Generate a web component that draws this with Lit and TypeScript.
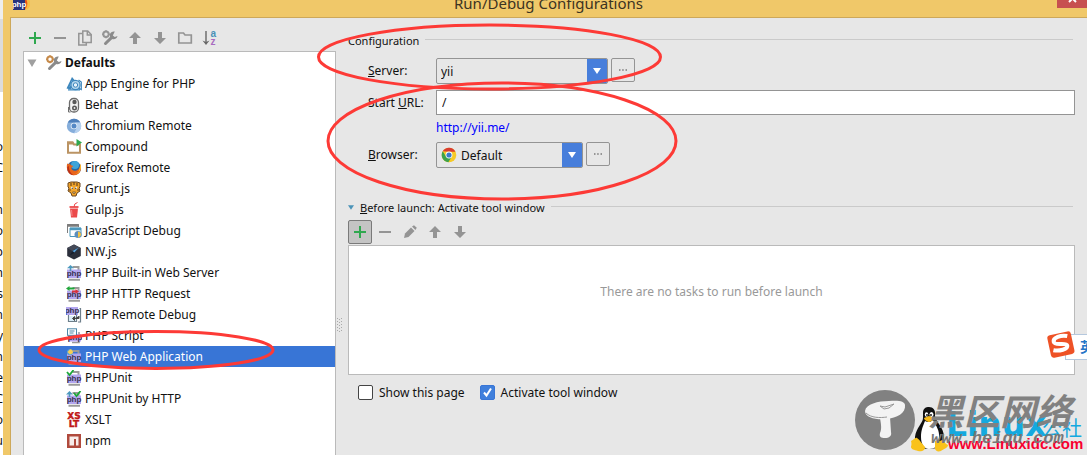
import { LitElement, html, css, svg, nothing } from "lit";
import { customElement, state } from "lit/decorators.js";
import { classMap } from "lit/directives/class-map.js";

const icon = (body: unknown, size = 16) =>
  html`<svg class="icon" width=${size} height=${size} viewBox="0 0 16 16" aria-hidden="true">${body}</svg>`;

const G = "#949494";

const plus = svg`<path d="M8 2v12M2 8h12" stroke="#2fa84f" stroke-width="2" fill="none"/>`;
const minus = svg`<path d="M2 8h12" stroke=${G} stroke-width="2"/>`;
const arrowUp = svg`<path d="M8 2l6 6h-4v6H6V8H2z" fill=${G}/>`;
const arrowDown = svg`<path d="M8 14l6-6h-4V2H6v6H2z" fill=${G}/>`;
const copy = svg`<g fill="#e7e7e7" stroke=${G} stroke-width="1.5">
  <path d="M5 3.500H1.800V15h7.500v-2"/><path d="M5.800 1h5L14.200 4.500V12.500H5.800z"/><path d="M10.300 1v4h4" fill="none"/></g>`;
const wrench = (nut: string) => svg`
  <circle cx="4" cy="4.200" r="2.700" fill="none" stroke=${nut} stroke-width="2"/>
  <path d="M4 .3v1.500M4 6.800v1.500M.1 4.200h1.500M6.400 4.200h1.500" stroke=${nut} stroke-width="1.600"/>
  <path d="M3.500 13.500L10 7.200" stroke="#8b8b8b" stroke-width="3" stroke-linecap="round"/>
  <path d="M12.800 1.600a3.900 3.900 0 1 0 2.700 4.300l-2.700 1.200-2-1.700z" fill="#8b8b8b"/>`;
const folder = svg`<path d="M1.800 13V3h4.700l1.500 2h6.300v8z" fill="none" stroke=${G} stroke-width="1.700"/>`;
const sortAz = svg`<path d="M4 1v12" stroke="#666" stroke-width="1.400"/><path d="M.5 10.500L4 15l3.500-4.500L4 12z" fill="#666"/>
  <text x="8.500" y="7" class="az" fill="#4a93b8">a</text><text x="8.500" y="15" class="az" fill="#a86bc0">z</text>`;
const pencil = svg`<path d="M2 14l1-4.500 6-6 3.500 3.500-6 6z" fill=${G}/><path d="M10 2.600L12 1.200l2.800 2.600L13.400 6z" fill=${G}/>`;
const php = svg`<rect x="1" y="4.500" width="14" height="8.500" fill="#b3a6ef"/><text x="8" y="10.500" class="php" text-anchor="middle">php</text>`;
const pageEdge = svg`<path d="M6.500 2h6v3M2.500 14.800h11.500" stroke="#9a9a9a" stroke-width="2" fill="none"/>`;

const icons: Record<string, unknown> = {
  engine: svg`<path d="M.5 12.500L6 1l3 3.500L5 13.500z" fill="#3d87bd"/><path d="M3.500 11L6 4.500l1.500 1.700z" fill="#cfe6f5"/>
    <circle cx="9.500" cy="9" r="4.600" fill="#b7d9ee" stroke="#3d87bd" stroke-width="1.200"/><circle cx="9.500" cy="9" r="2.200" fill="#e9f5fc" stroke="#3d87bd"/>
    <path d="M12.500 4l2.800 2v7.500l-3-1.500M2 13.800h12" fill="none" stroke="#3d87bd" stroke-width="1.200"/>`,
  behat: svg`<rect x="3.500" y="1.500" width="9" height="13.500" rx="4" fill="#f4f4f4" stroke="#6c6c6c" stroke-width="1.300"/>
    <circle cx="8.500" cy="5" r="2.200" fill="#5a5a5a"/><circle cx="8.500" cy="11" r="2.500" fill="#5a5a5a"/><circle cx="8.500" cy="11" r=".9" fill="#eee"/><path d="M2.500 10v5h2" stroke="#6c6c6c" fill="none"/>`,
  chromium: svg`<circle cx="8" cy="8" r="7.200" fill="#86aedb"/><path d="M1.800 4.400A7.200 7.200 0 0 1 14.300 4.500H8z" fill="#4d7fbb"/>
    <path d="M8 15.200a7.200 7.200 0 0 0 6.300-10.700H9l2 5z" fill="#b5d0ee"/><circle cx="8" cy="8" r="3.300" fill="#e6f0fa"/><circle cx="8" cy="8" r="2.500" fill="#5488c5"/>`,
  compound: svg`<path d="M2 13.800V3.200h4.600L8 5.500h6v8.300z" fill="none" stroke="#bb9464" stroke-width="2"/><path d="M1 3h6l1.500 2.500H1z" fill="#bb9464"/><path d="M10.500 0l5.500 3.500-5.500 4z" fill="#2fa84f"/>`,
  firefox: svg`<circle cx="8" cy="8" r="7" fill="#2467a8"/><circle cx="9" cy="5" r="4" fill="#3fa4da"/>
    <path d="M1.200 3.500C0 8 1.500 15.200 8 15.200S16 9 14.500 3.800c-.5 4-2 6.800-5 6.900C6.500 10.800 5 9.200 5.500 7.500L7.500 6 5 5.200 3.200 3 3 4.500z" fill="#e8641b"/>
    <path d="M14.500 3.800c1.500 5-1 10-5.500 10.400 3-1 4.300-3 4.500-5.500z" fill="#fbc02d"/><path d="M1.200 7C1.500 12 4 15.200 8 15.200 5 14 3 11 2.800 6z" fill="#b92e1a"/>`,
  grunt: svg`<path d="M2 2l3-1h6l3 1v4l-1 1 1 3-3 2-1 3H6l-1-3-3-2 1-3-1-1z" fill="#f0a32a" stroke="#6b4720"/>
    <path d="M5 2v3M8 1v3M11 2v3M3 9h2M11 9h2" stroke="#6b4720" stroke-width="1.200"/><circle cx="6" cy="7" r="1.200" fill="#fff"/><circle cx="10" cy="7" r="1.200" fill="#fff"/>
    <circle cx="6.200" cy="7.200" r=".7" fill="#3b2413"/><circle cx="9.800" cy="7.200" r=".7" fill="#3b2413"/><path d="M6.500 11h3l-1.500 2z" fill="#fbe3b0" stroke="#6b4720" stroke-width=".7"/>`,
  gulp: svg`<path d="M3.500 5h9" stroke="#eb4a4b" stroke-width="1.800"/><path d="M4 6.500h8L11 15.500H5z" fill="#eb4a4b"/><path d="M8 5l.8-3L11.500.5" fill="none" stroke="#eb4a4b"/><path d="M5 8h1l.6 6h-1z" fill="#f58a8a"/>`,
  jsdebug: svg`<path d="M1.500 10V1.500h11V4" fill="#fff" stroke="#7d7d7d"/><path d="M1 2.500h12" stroke="#7d7d7d" stroke-width="2.500"/>
    <path d="M4 5h11v8.500H4z" fill="#fff" stroke="#4b98bd"/><path d="M4 6h11" stroke="#4b98bd" stroke-width="2.500"/><circle cx="12" cy="11.500" r="3.500" fill="#5d8fbd"/><path d="M12 8.500a3 3 0 0 1 2.500 4.500L12 15z" fill="#f5c342"/>`,
  nw: svg`<path d="M8 .5l6.800 3.600v7.800L8 15.500l-6.800-3.600V4.100z" fill="#2b2f3b"/><path d="M8 .5l6.800 3.600L8 8 1.200 4.100z" fill="#454a58"/><path d="M3.500 11.500L7.500 6l5-2.500L8.500 9z" fill="#17202f"/><path d="M8.500 8.500l4-5-6 3.500z" fill="#58a2dd"/>`,
  phpServer: svg`${pageEdge}${php}<path d="M4.500 6V2" stroke="#4b98bd" stroke-width="1.600"/><path d="M1 3.200L4.500 0 8 3.200z" fill="#4b98bd"/>`,
  phpHttp: svg`${pageEdge}${php}<path d="M0 2.500L3.500 0v1.500h5v2h-5V5z" fill="#23a83c"/><path d="M13 5.500L9.500 3v1.500H6v2h3.500V8z" fill="#d8323a"/>`,
  phpRemote: svg`<path d="M13.500 1.500h1V15H12M2.500 8v6.500h8V8" fill="none" stroke="#6e7f8b" stroke-width="1.200"/><rect x="3" y="9" width="7" height="5" fill="#d9ecf6"/>
    <rect x="0" y="0" width="12" height="8" fill="#b3a6ef"/><text x="6" y="6" class="php" text-anchor="middle">php</text><path d="M13 9v2.500H8M8.500 9.500L6.500 11.500l2 2z" fill="#444" stroke="#444"/>`,
  phpScript: svg`<path d="M13 4v10.500H6" fill="none" stroke="#9a9a9a" stroke-width="1.500"/><rect x="2" y="6" width="13" height="7.500" fill="#b3a6ef"/><text x="9" y="12" class="php" text-anchor="middle">php</text>
    <rect x="1.500" y=".8" width="9" height="6.500" fill="#fff" stroke="#4b87a8"/><path d="M3.500 3h5M3.500 5h4" stroke="#4b87a8"/>`,
  phpWeb: svg`${pageEdge}${php}<circle cx="4" cy="3.200" r="3" fill="#5ba1d0"/><path d="M4 .2a3 3 0 0 1 2.800 4L4 5.500 1.500 3z" fill="#f7cf54"/>`,
  phpunit: svg`${pageEdge}${php}<path d="M1 2l2.500 3L7.500 0" fill="none" stroke="#1ca838" stroke-width="1.800"/>`,
  phpunitHttp: svg`${pageEdge}${php}<path d="M3.500 6V2" stroke="#4b98bd" stroke-width="1.600"/><path d="M0 3.500L3.500 0 7 3.500z" fill="#4b98bd"/><path d="M8 2l2.500 3L14.500 0" fill="none" stroke="#1ca838" stroke-width="1.800"/>`,
  xslt: svg`<text x="8" y="7.300" class="xs" text-anchor="middle">XS</text><text x="8" y="15.300" class="xs" text-anchor="middle">LT</text>`,
  npm: svg`<rect x="1" y="1" width="14" height="14" fill="#b04a3d"/><path d="M3.500 3.500h9v9H10V6H8v6.500H3.500z" fill="#f7ecea"/>`,
};

const chrome = svg`<circle cx="8" cy="8" r="7.300" fill="#f6c927"/><path d="M1.700 4.300A7.300 7.300 0 0 1 14.400 4.700H8z" fill="#d93c30"/>
  <path d="M1.700 4.300A7.300 7.300 0 0 0 7.300 15.300L10.300 10.500 5 9.500z" fill="#3da24b"/><circle cx="8" cy="8" r="3.400" fill="#fff"/><circle cx="8" cy="8" r="2.600" fill="#3b7bc8"/>`;

const ENTRIES: [string, string][] = [
  ["engine", "App Engine for PHP"], ["behat", "Behat"], ["chromium", "Chromium Remote"], ["compound", "Compound"],
  ["firefox", "Firefox Remote"], ["grunt", "Grunt.js"], ["gulp", "Gulp.js"], ["jsdebug", "JavaScript Debug"],
  ["nw", "NW.js"], ["phpServer", "PHP Built-in Web Server"], ["phpHttp", "PHP HTTP Request"], ["phpRemote", "PHP Remote Debug"],
  ["phpScript", "PHP Script"], ["phpWeb", "PHP Web Application"], ["phpunit", "PHPUnit"], ["phpunitHttp", "PHPUnit by HTTP"],
  ["xslt", "XSLT"], ["npm", "npm"],
];

const BEHIND = ["o", "C", "", "n", "o", "p", "m", "s", "n", "y", "n", "e", "C", "o", "u"];

const shared = css`
  * { box-sizing: border-box; }
  .icon { display: block; flex: none; }
  button { font: inherit; color: inherit; padding: 0; border: 0; background: none; }
  .php { font: bold 8px "Liberation Sans", sans-serif; fill: #38324f; }
  .xs { font: bold 9px "DejaVu Sans", sans-serif; fill: #c01818; stroke: #c01818; stroke-width: .4px; }
  .az { font: bold 10px "Liberation Sans", sans-serif; }
  .bar { display: flex; align-items: center; gap: 1px; }
  .bar button { display: grid; place-items: center; width: 24px; height: 24px; }
`;

@customElement("config-tree")
class ConfigTree extends LitElement {
  @state() private selected = "PHP Web Application";

  static styles = [shared, css`
    :host { display: flex; flex-direction: column; min-height: 0; padding-top: 8px; }
    .tree { flex: 1; min-height: 0; margin: 1px 0 0; padding: 0; list-style: none; background: #fff; border: 1px solid #bababa; border-bottom: 0; overflow: hidden; }
    .row { display: flex; align-items: center; gap: 3px; width: 100%; height: 21px; padding-left: 42px; text-align: left; white-space: nowrap; }
    .row.root { padding-left: 0; font-weight: bold; }
    .root .icon + .icon { margin-left: 3px; }
    .row.on { background: #3875d6; color: #fff; }
  `];

  render() {
    const tools: [string, unknown][] = [["Add", plus], ["Remove", minus], ["Copy", copy], ["Edit defaults", wrench(G)],
      ["Move up", arrowUp], ["Move down", arrowDown], ["Create folder", folder], ["Sort", sortAz]];
    return html`
      <div class="bar">${tools.map(([name, body]) => html`<button aria-label=${name}>${icon(body)}</button>`)}</div>
      <ul class="tree">
        <li><button class="row root">${icon(svg`<path d="M3.500 4.500h9L8 12z" fill="#a0a0a0"/>`)}${icon(wrench("#c68a4a"))}Defaults</button></li>
        ${ENTRIES.map(([key, label]) => html`<li>
          <button class=${classMap({ row: true, on: label === this.selected })} @click=${() => (this.selected = label)}>
            ${icon(icons[key])}<span>${label}</span></button></li>`)}
      </ul>`;
  }
}

@customElement("config-form")
class ConfigForm extends LitElement {
  static styles = [shared, css`
    :host { display: block; min-width: 0; padding: 12px 12px 0 0; }
    .group { display: flex; align-items: center; gap: 6px; height: 20px; padding-right: 2px; font-size: 11px; white-space: nowrap; }
    .line { flex: 1; height: 1px; margin-bottom: 2px; background: #cacaca; }
    .arrow { width: 6px; height: 20px; display: flex; align-items: center; }
    .fields { display: grid; grid-template-columns: 68px 1fr; align-items: center; padding: 8px 0 0 20px; }
    .cell { display: flex; gap: 3px; height: 32px; align-items: flex-start; }
    .cell.last { height: 26px; }
    .label { height: 26px; line-height: 26px; align-self: start; white-space: nowrap; }
    .combo { display: flex; height: 26px; border: 1px solid #949494; border-radius: 2px; overflow: hidden; position: relative; align-items: center; }
    .combo.server { width: 172px; }
    .combo.browser { width: 147px; padding-left: 4px; }
    .combo select { flex: 1; min-width: 0; height: 24px; appearance: none; border: 0; background: none; font: inherit; color: #111; padding: 0 4px; }
    .drop { width: 20px; height: 26px; display: grid; place-items: center; background: #477edb; pointer-events: none; }
    .more { width: 24px; height: 24px; border: 1px solid #949494; border-radius: 2px; }
    .more svg { margin: auto; }
    .url { width: 100%; height: 25px; border: 1px solid #949494; background: #fff; font: inherit; color: #111; padding: 0 5px; }
    .link { grid-column: 2; justify-self: start; height: 24px; line-height: 24px; margin-bottom: 2px; color: #00f; text-decoration: none; }
    .launch { margin-top: 29px; }
    .tasks { height: 130px; padding-top: 36px; border: 1px solid #bababa; background: #fff; color: #999; text-align: center; line-height: 20px; }
    .steps { margin: 3px 0 1px; }
    .steps .add { border: 1px solid #7a7a7a; border-radius: 2px; background: #c4c4c4; }
    .checks { display: flex; gap: 15px; padding: 7px 0 0 10px; }
    .check { display: flex; align-items: center; gap: 6px; height: 20px; white-space: nowrap; }
    .check input { appearance: none; width: 15px; height: 15px; margin: 0; border: 1px solid #444; border-radius: 2px; background: #fff; }
    .check input:checked { border-color: #3875d6; background: #3f7fdc; }
    .box { display: grid; }
    .box > * { grid-area: 1 / 1; }
    .box svg { pointer-events: none; }
    input:not(:checked) + svg { visibility: hidden; }
  `];

  private drop() {
    return html`<span class="drop"><svg width="8" height="6" viewBox="0 0 8 6"><path d="M0 0h8L4 6z" fill="#fff"/></svg></span>`;
  }

  private more(label: string) {
    return html`<button class="more" aria-label=${label}><svg class="icon" width="8" height="2" viewBox="0 0 8 2"><path d="M0 1h1.500M3.200 1h1.500M6.500 1h1.500" stroke="#444"/></svg></button>`;
  }

  private check(id: string, label: string, on: boolean) {
    return html`<div class="check"><span class="box"><input type="checkbox" id=${id} .checked=${on} />
      <svg width="15" height="15" viewBox="0 0 15 15"><path d="M4 7.500l2.500 3L11 3.500" fill="none" stroke="#fff" stroke-width="2"/></svg></span>
      <label for=${id}>${label}</label></div>`;
  }

  render() {
    const steps: [string, unknown][] = [["Add", plus], ["Remove", minus], ["Edit", pencil], ["Move up", arrowUp], ["Move down", arrowDown]];
    return html`
      <div class="group">Configuration<span class="line"></span></div>
      <div class="fields">
        <label class="label" for="server"><u>S</u>erver:</label>
        <div class="cell"><div class="combo server"><select id="server"><option>yii</option></select>${this.drop()}</div>${this.more("Servers")}</div>
        <label class="label" for="url">Start <u>U</u>RL:</label>
        <div class="cell last"><input class="url" id="url" value="/" /></div>
        <a class="link" href="http://yii.me/">http://yii.me/</a>
        <label class="label" for="browser"><u>B</u>rowser:</label>
        <div class="cell last"><div class="combo browser">${icon(chrome)}<select id="browser"><option>Default</option></select>${this.drop()}</div>${this.more("Browsers")}</div>
      </div>
      <div class="group launch"><span class="arrow"><svg width="7" height="5" viewBox="0 0 7 5"><path d="M0 0h7L3.500 5z" fill="#4b93b8"/></svg></span><span><u>B</u>efore launch: Activate tool window</span><span class="line"></span></div>
      <div class="bar steps">${steps.map(([name, body], i) => html`<button class=${i === 0 ? "add" : nothing} aria-label=${name}>${icon(body)}</button>`)}</div>
      <div class="tasks">There are no tasks to run before launch</div>
      <div class="checks">${this.check("show", "Show this page", false)}${this.check("activate", "Activate tool window", true)}</div>`;
  }
}

@customElement("page-overlays")
class PageOverlays extends LitElement {
  static styles = css`
    :host { position: absolute; inset: 0; overflow: hidden; pointer-events: none; white-space: nowrap; line-height: 1; }
    .rings { position: absolute; left: 0; top: 0; }
    .marks { position: absolute; right: 0; bottom: 0; width: 247px; height: 80px; }
    .marks > * { position: absolute; }
    .disc { left: 14px; top: 14px; }
    .tux { left: 70px; top: 30px; }
    .linux { left: 106px; top: 33px; font: bold 33px/1 "DejaVu Sans", sans-serif; color: #14a9df; }
    .she { left: 202px; top: 43px; font: 20px/1 "Noto Sans CJK SC", sans-serif; color: #14a9df; }
    .idc { left: 108px; top: 61px; font: bold 15px/1 "Liberation Sans", sans-serif; color: #f8002f; }
    .hei { left: 88px; top: 16px; font: italic bold 36px/1 "Noto Sans CJK SC", sans-serif; color: #818181; }
    .heiqu { left: 91px; top: 55px; font: italic bold 17px/1 "Liberation Mono", monospace; color: #777; }
    .ime { position: absolute; right: 0; top: 330px; width: 42px; height: 30px; }
    .tab { position: absolute; left: 20px; top: 4px; width: 30px; height: 24px; background: #fff; border: 1px solid #b5c8de; }
    .ying { position: absolute; left: 35px; top: 9px; font: bold 14px/1 "Noto Sans CJK SC", sans-serif; color: #2676c8; }
    .sogou { position: absolute; left: 1px; top: 0; }
  `;

  render() {
    return html`
      <svg class="rings" width="700" height="455" fill="none" stroke="#fd3a36" stroke-width="3">
        <ellipse cx="489.500" cy="57" rx="171" ry="32"/><ellipse cx="502" cy="141" rx="174" ry="58"/><ellipse cx="156" cy="350" rx="117" ry="18.500"/>
      </svg>
      <div class="ime"><span class="tab"></span><span class="ying">英</span>
        <svg class="sogou" width="30" height="30" viewBox="0 0 30 30"><g transform="rotate(-12 15 15)"><rect x="3" y="3" width="24" height="23" rx="3" fill="#ee5226"/>
          <path d="M23 7.500C17 5 8.500 6 8.500 10.500c0 4.500 12.500 2.500 12.500 6.500 0 3.500-9 4-14.500 1.500" fill="none" stroke="#fff" stroke-width="4"/></g></svg>
      </div>
      <div class="marks">
        <svg class="disc" width="62" height="62" viewBox="0 0 62 62"><circle cx="31" cy="31" r="30" fill="#818181"/>
          <path d="M11 22C12 15 24 12 35 12c9-1 16 0 16 4 1 8-8 13-19 14-9 1-21-1-21-8z" fill="#f3f3f3"/>
          <path d="M26 29l10-1 1 15c1 4-2 6-6 6s-6-1-5-5c2-4 1-9 0-15z" fill="#f3f3f3"/><path d="M26 17l5 1 9-3-5 4-5 1zM12 24c5 5 14 5 21 4" stroke="#999" fill="none"/></svg>
        <svg class="tux" width="40" height="48" viewBox="0 0 40 48">
          <path d="M13 8C13 3 16 2 19 2c4 0 7 3 6 9 0 5 9 11 9 21 0 8-6 12-15 12S4 40 5 32c1-9 8-14 8-19z" fill="#101010"/>
          <path d="M15 16c3 2 6 1 8-1 3 6 7 10 6 19-1 7-4 10-10 10-5 0-8-5-8-12s2-11 4-16z" fill="#fff"/>
          <ellipse cx="16.500" cy="9.500" rx="1.700" ry="2.300" fill="#fff"/><ellipse cx="21.500" cy="9.500" rx="2" ry="2.500" fill="#fff"/><circle cx="17" cy="10" r=".9"/><circle cx="21" cy="10" r=".9"/>
          <path d="M14 13l5-2 5 2c0 2-4 4-5 4s-5-2-5-4z" fill="#f5b919"/>
          <path d="M1 36c3-1 4-4 6-3 3 2 5 6 8 9 0 4-4 5-7 4-4-1-7-2-7-4 0-1 1-2 0-6z" fill="#f9c21a"/>
          <path d="M25 36c2-1 4 1 7-1 2 0 2 3 6 5 0 3-5 4-7 6-3 1-6 0-6-3z" fill="#f9c21a"/></svg>
        <span class="linux">Linux</span><span class="she">公社</span><span class="idc">www.Linuxidc.com</span>
        <span class="hei">黑区网络</span><span class="heiqu">www.heiqu.com</span>
      </div>`;
  }
}

@customElement("app-root")
class AppRoot extends LitElement {
  static styles = [shared, css`
    :host { position: relative; display: grid; grid-template-columns: 3px 1fr; height: 100vh; overflow: hidden; background: #fff; color: #111; font: 12px "Noto Sans", "Noto Sans CJK SC", sans-serif; }
    .behind { display: flex; flex-direction: column; overflow: hidden; align-items: flex-end; line-height: 21px; }
    .behind .top { flex: none; width: 100%; height: 92px; margin-bottom: 44px; background: #dcdcdc; border-top: 19px solid #eee; }
    .behind span { height: 21px; flex: none; }
    .window { display: flex; flex-direction: column; min-width: 0; min-height: 0; background: #f0c869; padding-left: 7px; }
    .title { position: relative; flex: none; height: 17px; display: flex; align-items: flex-end; justify-content: center; }
    .name { font-size: 15px; line-height: 28px; color: #3c3322; white-space: nowrap; }
    .logo { position: absolute; left: 3px; top: -5px; }
    .close { position: absolute; right: 0; top: 0; width: 30px; height: 8px; background: #c75050; }
    .close svg { display: block; margin: auto; }
    .body { flex: 1; min-height: 0; display: grid; grid-template-columns: 313px 12px 1fr; padding-left: 12px; background: #e7e7e7; border: solid #cda85a; border-width: 1px 0 0 1px; }
    .grip { align-self: start; margin: 300px 0 0 1px; }
    .light { fill: #fff; }
  `];

  render() {
    return html`
      <div class="behind"><div class="top"></div>${BEHIND.map((t) => html`<span>${t}</span>`)}</div>
      <div class="window">
        <div class="title">
          <svg class="logo" width="17" height="17" viewBox="0 0 17 17" aria-hidden="true"><circle cx="10" cy="8.500" r="6.500" fill="#e8551c"/><path d="M11 2a6 6 0 0 1 0 13 8 8 0 0 0 0-13z" fill="#f9bd42"/>
            <rect x="0" y="1" width="12" height="14" fill="#26337c"/><text x="6" y="12" text-anchor="middle" class="php light">php</text></svg>
          <span class="name">Run/Debug Configurations</span>
          <button class="close" aria-label="Close"><svg width="9" height="8" viewBox="0 0 9 8"><path d="M1 -5l7 7M8 -5L1 2" stroke="#fff" stroke-width="2"/></svg></button>
        </div>
        <div class="body">
          <config-tree></config-tree>
          <svg class="grip" width="5" height="15" viewBox="0 0 5 15"><path d="M.5 0v15M2.500 1v14M4.500 0v15" stroke="#aaa" stroke-dasharray="1 2"/></svg>
          <config-form></config-form>
        </div>
      </div>
      <page-overlays></page-overlays>`;
  }
}
